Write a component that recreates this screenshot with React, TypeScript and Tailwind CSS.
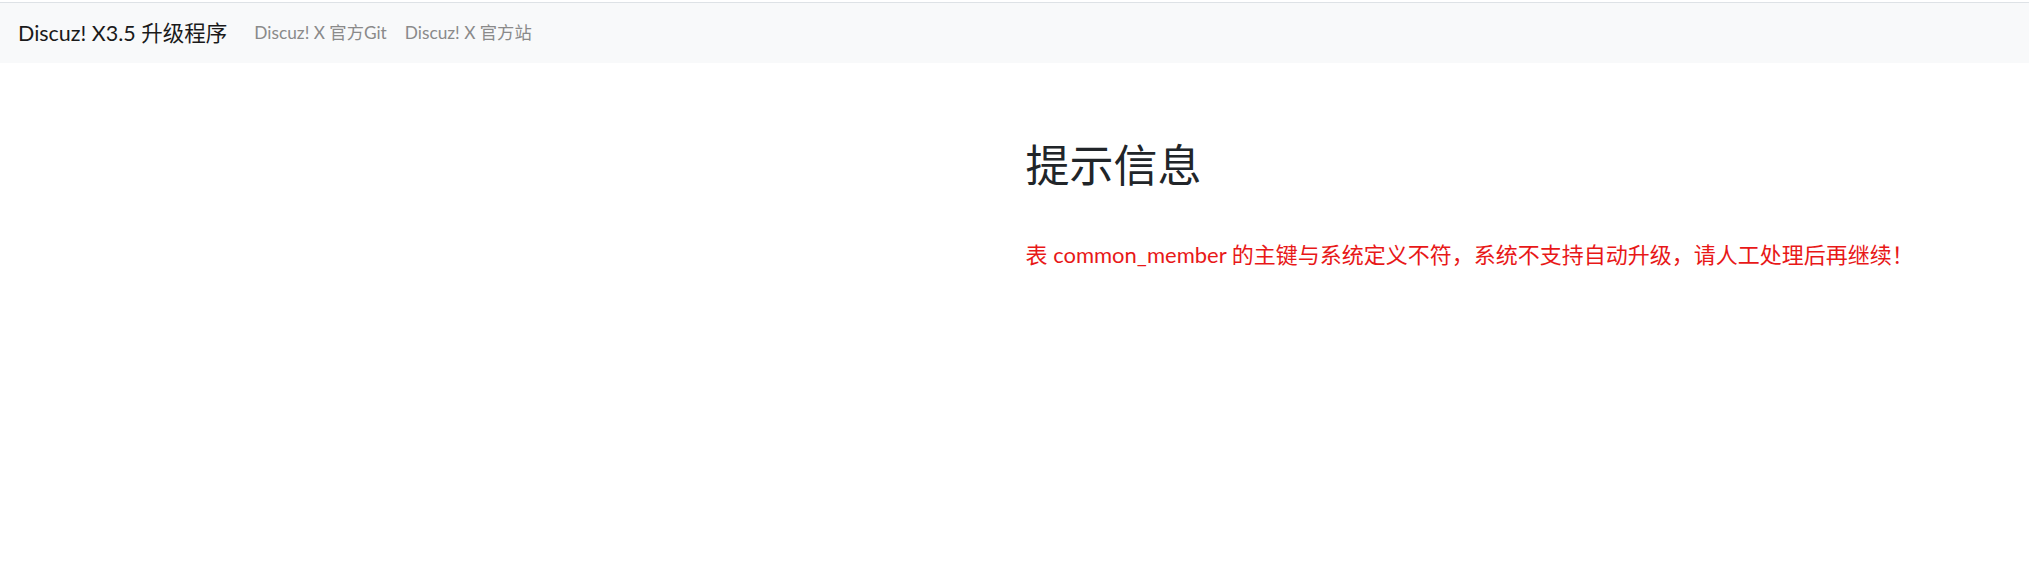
export default function App() {
  const font = {
    fontFamily: 'Lato, "Noto Sans CJK SC", sans-serif',
  };

  return (
    <div className="min-h-[570px] bg-white" style={font}>
      <div className="h-[2px] bg-white" />
      {/* Navbar */}
      <nav className="flex h-[61px] items-center border-t border-[#dee2e6] bg-[#f8f9fa] px-[18px]">
        <span className="mr-[18px] text-[21.5px] leading-[1.5] text-[#1a1a1a]">
          Discuz! X3.5 升级程序
        </span>
        <a className="px-[9px] text-[17.3px] leading-[1.5] text-[#8a8a8a]">
          Discuz! X 官方Git
        </a>
        <a className="px-[9px] text-[17.3px] leading-[1.5] text-[#8a8a8a]">
          Discuz! X 官方站
        </a>
      </nav>

      {/* Message */}
      <div className="grid grid-cols-2">
        <div />
        <div className="px-[11px] pt-[76px]">
          <h1 className="mb-[46px] text-[44px] font-normal leading-[1.2] text-[#212529]">
            提示信息
          </h1>
          <p className="text-[22px] leading-[1.5] text-[#e81818]">
            表 common_member 的主键与系统定义不符，系统不支持自动升级，请人工处理后再继续！
          </p>
        </div>
      </div>
    </div>
  );
}
